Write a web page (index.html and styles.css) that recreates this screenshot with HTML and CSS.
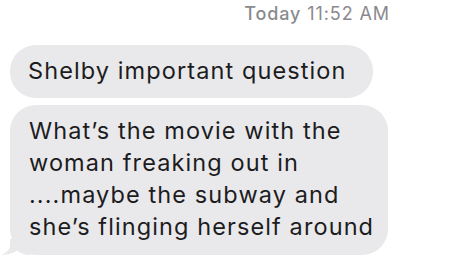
FILE: index.html
```html
<!DOCTYPE html>
<html>

<head>
    <meta charset="utf-8">
    <title>Messages</title>
    <link rel="stylesheet" href="styles.css">
</head>

<body>
    <div class="thread">
        <div class="stamp"><b>Today</b> 11:52 AM</div>

        <div class="msg">
            <div class="bubble">Shelby important question</div>
        </div>
        <div class="msg">
            <div class="bubble last">What’s the movie with the woman freaking out in ....maybe the subway and she’s flinging herself around
                <svg class="tail" width="30" height="16" viewBox="0 0 30 16">
                    <path d="M10 0 L10 6 C10 11 6 14 1 15.6 C7 16.2 13 14.5 17 11.5 C20 14 24 16 30 16 L30 0 Z" />
                </svg>
            </div>
        </div>
    </div>
</body>

</html>
```

FILE: styles.css
```css
body {
    margin: 0;
    background: #ffffff;
    font-family: Inter, "Liberation Sans", sans-serif;
}

.thread {
    padding: 3px 0 0 10px;
}

.stamp {
    font-size: 18px;
    line-height: 22px;
    letter-spacing: 0.9px;
    color: #8a8a8e;
    text-align: right;
    padding-right: 61px;
    margin-bottom: 20px;
}

.stamp b {
    font-weight: 500;
}

.msg {
    margin-bottom: 7px;
}

.bubble {
    position: relative;
    display: inline-block;
    box-sizing: border-box;
    background: #e9e9eb;
    color: #1c1c1e;
    font-size: 23.5px;
    line-height: 32px;
    letter-spacing: 1.1px;
    padding: 10px 26px 11px 18px;
    border-radius: 26px;
}

.bubble.last {
    width: 378px;
    padding: 10px 8px 12px 19px;
}

.tail {
    position: absolute;
    left: -10px;
    bottom: 0;
    fill: #e9e9eb;
}
```
